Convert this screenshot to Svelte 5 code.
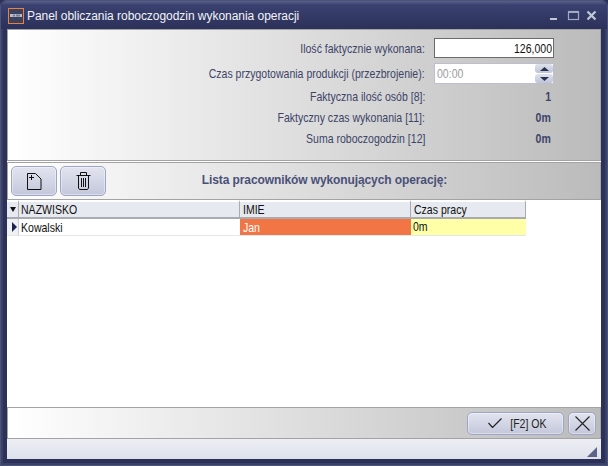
<script lang="ts">
  const stats = [
    { label: 'Faktyczna ilość osób [8]:', value: '1' },
    { label: 'Faktyczny czas wykonania [11]:', value: '0m' },
    { label: 'Suma roboczogodzin [12]', value: '0m' }
  ];
</script>

<div class="window">
  <header class="titlebar">
    <svg class="logo" width="16" height="16" viewBox="0 0 16 16">
      <rect x="0.5" y="0.5" width="15" height="15" fill="#3a4260" stroke="#e9823f" />
      <rect x="2" y="6" width="12" height="3" fill="#b9bcc6" />
      <path d="M6 6.5v2M9 6.5v2M11 6.5v2" stroke="#3a4260" />
    </svg>
    <span class="title">Panel obliczania roboczogodzin wykonania operacji</span>
    <svg class="controls" width="56" height="14" viewBox="0 0 56 14">
      <path d="M1 10h7" stroke="#c3c8d8" stroke-width="2" />
      <rect x="19.500" y="2.500" width="10" height="8" fill="none" stroke="#a3a9c0" stroke-width="1.200" />
      <path d="M19.500 3h10" stroke="#a3a9c0" stroke-width="2" />
      <path d="M38.500 2.500l8 8M46.500 2.500l-8 8" stroke="#c3c8d8" stroke-width="2.200" />
    </svg>
  </header>

  <div class="body">
    <section class="panel form">
      <div class="row qty-row">
        <span class="nar">Ilość faktycznie wykonana:</span>
        <div class="qty"><span class="nar">126,000</span></div>
      </div>
      <div class="row time-row">
        <span class="nar">Czas przygotowania produkcji (przezbrojenie):</span>
        <div class="spin">
          <div class="spin-value"><span class="nar">00:00</span></div>
          <div class="arrows">
            <span><svg width="9" height="4" viewBox="0 0 9 4"><path d="M4.500 0L9 4H0z" fill="#2a3050" /></svg></span>
            <span><svg width="9" height="4" viewBox="0 0 9 4"><path d="M0 0h9L4.500 4z" fill="#2a3050" /></svg></span>
          </div>
        </div>
      </div>
      <div class="stats">
        {#each stats as s}
          <div class="row stat">
            <span class="nar">{s.label}</span>
            <b><span class="nar">{s.value}</span></b>
          </div>
        {/each}
      </div>
    </section>

    <section class="panel toolbar">
      <button class="btn tool" aria-label="Dodaj">
        <svg width="15" height="17" viewBox="0 0 15 17" fill="none" stroke="#111">
          <path d="M0.500 0.500h8l5.500 5.500v10.500h-13.500z" />
          <path d="M2 4.500h5M4.500 2v5" />
        </svg>
      </button>
      <button class="btn tool" aria-label="Usuń">
        <svg width="15" height="18" viewBox="0 0 15 18" fill="none" stroke="#111">
          <path d="M0.500 3.500h14M4.500 3V0.500h6V3" />
          <path d="M2.500 4v12l1 1.500h8l1-1.500V4" />
          <path d="M5.500 6v9M7.500 6v9M9.500 6v9" />
        </svg>
      </button>
      <h2>Lista pracowników wykonujących operację:</h2>
    </section>

    <div class="grid">
      <div class="cell corner">
        <svg width="6" height="5" viewBox="0 0 6 5"><path d="M0 0h6L3 5z" fill="#111" /></svg>
      </div>
      <div class="cell head c1"><span class="nar">NAZWISKO</span></div>
      <div class="cell head c2"><span class="nar">IMIE</span></div>
      <div class="cell head c3"><span class="nar">Czas pracy</span></div>
      <div class="cell marker">
        <svg width="5" height="10" viewBox="0 0 5 10"><path d="M0 0l5 5-5 5z" fill="#1c2350" /></svg>
      </div>
      <div class="cell data c1"><span class="nar">Kowalski</span></div>
      <div class="cell data c2 orange"><span class="nar">Jan</span></div>
      <div class="cell data c3 yellow"><span class="nar">0m</span></div>
    </div>

    <section class="panel footer">
      <button class="btn ok">
        <svg width="14" height="10" viewBox="0 0 14 10" fill="none" stroke="#222" stroke-width="1.200">
          <path d="M0.500 5l4 4.500L13.500 0.500" />
        </svg>
        <span class="nar mid">[F2] OK</span>
      </button>
      <button class="btn close" aria-label="Zamknij">
        <svg width="15" height="15" viewBox="0 0 15 15" fill="none" stroke="#222" stroke-width="1.100">
          <path d="M0.500 0.500l14 14M14.500 0.500l-14 14" />
        </svg>
      </button>
    </section>

    <div class="status">
      <svg class="grip" width="10" height="10" viewBox="0 0 10 10"><path d="M10 0v10H0z" fill="#5c6488" /></svg>
    </div>
  </div>
</div>

<style>
  :global(body) {
    margin: 0;
    background: #2b3159;
  }

  .window {
    width: 608px;
    height: 466px;
    box-sizing: border-box;
    display: flex;
    flex-direction: column;
    padding: 0 6px 6px;
    background: #2b3159;
    border: 1px solid #4b5378;
    border-radius: 6px 6px 0 0;
    box-shadow: inset 0 0 0 2px #3a4168;
    font-family: "Liberation Sans", Arial, sans-serif;
    font-size: 13px;
    color: #3d4468;
  }

  /* no narrow family is installed, so the UI font is squeezed */
  .nar {
    display: inline-block;
    white-space: nowrap;
    transform: scaleX(0.81);
    transform-origin: left center;
  }

  .row .nar {
    transform-origin: right center;
  }

  .spin .nar {
    transform-origin: left center;
  }

  .nar.mid {
    transform-origin: center;
  }

  .titlebar {
    height: 27px;
    flex: none;
    display: flex;
    align-items: center;
    gap: 3px;
    margin: 0 -6px;
    padding: 1px 2px 0 7px;
    background: linear-gradient(#5a6088 0, #3a4170 4px, #2b3159 100%);
    border-radius: 6px 6px 0 0;
  }

  .title {
    flex: 1;
    color: #f2f3f8;
    font-size: 12px;
    letter-spacing: -0.04px;
  }

  .body {
    flex: 1;
    display: flex;
    flex-direction: column;
    min-height: 0;
    background: #fff;
  }

  .panel {
    flex: none;
    box-sizing: border-box;
    background: linear-gradient(90deg, #fff 0%, #bbb 100%);
    border: 1px solid #a3a3a6;
  }

  .form {
    height: 132px;
    margin-bottom: 1px;
    padding: 8px 46px 0 0;
  }

  .row {
    display: flex;
    justify-content: flex-end;
    align-items: center;
    gap: 9px;
  }

  .qty-row {
    height: 20px;
  }

  .time-row {
    height: 21px;
    margin-top: 5px;
  }

  .stats {
    margin-top: 2px;
  }

  .stat {
    height: 21px;
  }

  .stat b {
    width: 120px;
    box-sizing: border-box;
    padding-right: 3px;
    text-align: right;
  }

  .qty {
    width: 120px;
    height: 20px;
    box-sizing: border-box;
    display: flex;
    align-items: center;
    justify-content: flex-end;
    border: 1px solid #6b6b6b;
    padding: 0 1px;
    background: #fff;
    color: #111;
  }

  .spin {
    width: 120px;
    height: 21px;
    box-sizing: border-box;
    display: flex;
    border: 1px solid #bcbfd0;
    background: #fff;
  }

  .spin-value {
    flex: 1;
    display: flex;
    align-items: center;
    padding-left: 2px;
    color: #9a9a9a;
  }

  .arrows {
    width: 18px;
    display: flex;
    flex-direction: column;
    gap: 1px;
  }

  .arrows span {
    flex: 1;
    display: flex;
    align-items: center;
    justify-content: center;
    border-radius: 3px;
    background: linear-gradient(#dfe2ec, #bfc4d6);
  }

  .toolbar {
    height: 38px;
    display: flex;
    align-items: center;
    gap: 3px;
    padding-left: 3px;
  }

  .toolbar h2 {
    flex: 1;
    margin: 0;
    padding: 0 60px 3px 0;
    font-size: 12px;
    font-weight: bold;
    letter-spacing: -0.1px;
    text-align: center;
    color: #4a5078;
  }

  .btn {
    display: flex;
    align-items: center;
    justify-content: center;
    padding: 0;
    border: 1px solid #9ea6c8;
    border-radius: 5px;
    background: linear-gradient(#e2e4ef, #c3c7da);
    box-shadow: inset 0 0 0 1px rgba(255, 255, 255, 0.4);
    font: inherit;
    color: #222;
  }

  .tool {
    width: 46px;
    height: 30px;
  }

  .grid {
    flex: 1;
    display: grid;
    grid-template-columns: 12px 221px 171px 115px;
    grid-template-rows: 19px 17px 1fr;
    background: #fff;
  }

  .cell {
    box-sizing: border-box;
    display: flex;
    align-items: center;
    padding-left: 2px;
    overflow: hidden;
    color: #111;
  }

  .corner,
  .head {
    border-top: 2px solid #fff;
    border-right: 1px solid #a9abb0;
    border-bottom: 2px solid #a9abb0;
    background: #e6e9ef;
  }

  .corner {
    padding-left: 3px;
  }

  .marker {
    padding-left: 5px;
    border-right: 1px solid #c9ccd4;
    border-bottom: 1px solid #e4e6ea;
    background: #eef0f4;
  }

  .head.c2,
  .head.c3,
  .data.c2 {
    padding-left: 3px;
  }

  .data {
    border-bottom: 1px solid #e4e6ea;
  }

  .orange {
    background: #f27645;
    color: #fff;
  }

  .yellow {
    align-items: flex-start;
    background: #ffffa8;
  }

  .footer {
    height: 32px;
    display: flex;
    align-items: center;
    justify-content: flex-end;
    gap: 4px;
    padding-right: 4px;
  }

  .ok {
    width: 97px;
    height: 23px;
    justify-content: flex-start;
    gap: 4px;
    padding-left: 20px;
  }

  .close {
    width: 28px;
    height: 23px;
  }

  .status {
    flex: none;
    height: 20px;
    position: relative;
    background: linear-gradient(#edeff4, #dde1ea);
  }

  .grip {
    position: absolute;
    right: 4px;
    bottom: 2px;
  }
</style>
